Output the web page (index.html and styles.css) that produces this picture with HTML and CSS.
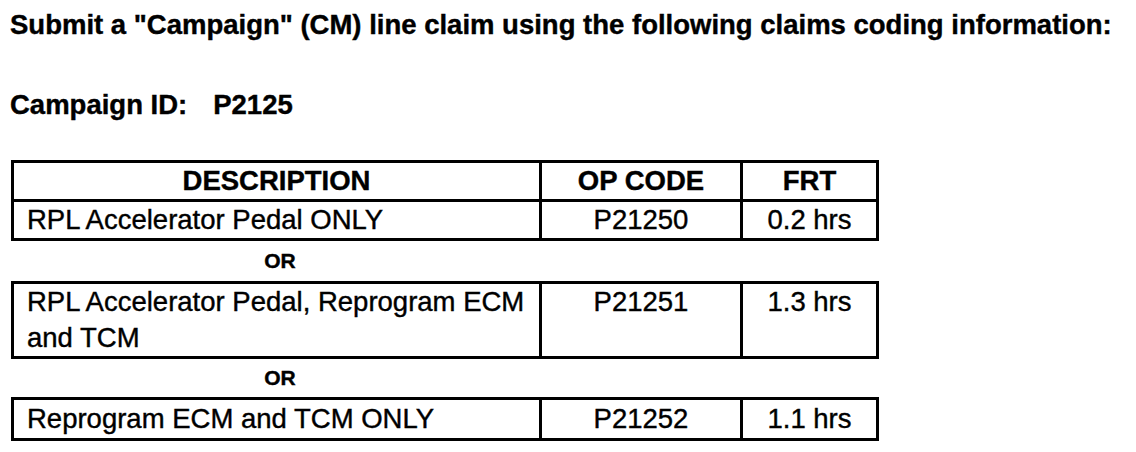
FILE: index.html
```html
<!DOCTYPE html>
<html lang="en">
<head>
<meta charset="utf-8">
<title>Campaign claim</title>
<link rel="stylesheet" href="styles.css">
</head>
<body>
<main class="page">
  <h1 class="title">Submit a "Campaign" (CM) line claim using the following claims coding information:</h1>
  <p class="campaign">Campaign ID:<span class="campaign-id">P2125</span></p>

  <table class="claim claim-head">
    <colgroup><col class="c-desc"><col class="c-op"><col class="c-frt"></colgroup>
    <tr class="row head">
      <th>DESCRIPTION</th><th>OP CODE</th><th>FRT</th>
    </tr>
    <tr class="row">
      <td class="desc">RPL Accelerator Pedal ONLY</td><td class="op">P21250</td><td class="frt">0.2 hrs</td>
    </tr>
  </table>

  <div class="or">OR</div>

  <table class="claim">
    <colgroup><col class="c-desc"><col class="c-op"><col class="c-frt"></colgroup>
    <tr class="row">
      <td class="desc">RPL Accelerator Pedal, Reprogram ECM and TCM</td><td class="op">P21251</td><td class="frt">1.3 hrs</td>
    </tr>
  </table>

  <div class="or or-last">OR</div>

  <table class="claim claim-last">
    <colgroup><col class="c-desc"><col class="c-op"><col class="c-frt"></colgroup>
    <tr class="row">
      <td class="desc">Reprogram ECM and TCM ONLY</td><td class="op">P21252</td><td class="frt">1.1 hrs</td>
    </tr>
  </table>
</main>
</body>
</html>
```

FILE: styles.css
```css
html, body {
  margin: 0;
  padding: 0;
  background: #ffffff;
}

body {
  font-family: "Liberation Sans", Arial, Helvetica, sans-serif;
  color: #000000;
  -webkit-text-stroke: 0.4px #000000;
}

.page {
  padding: 9px 0 0 10px;
}

.title {
  margin: 0;
  font-size: 27.5px;
  line-height: 31px;
  font-weight: 700;
  white-space: nowrap;
}

.campaign {
  margin: 49px 0 0;
  font-size: 27.5px;
  line-height: 31px;
  font-weight: 700;
}

.campaign-id {
  margin-left: 26px;
}

.claim {
  margin: 40px 0 0 1px;
  width: 865px;
  table-layout: fixed;
  border-collapse: collapse;
  font-size: 27.5px;
  line-height: 36px;
}

.claim-head {
  margin-top: 40px;
}

.claim + .or,
.or + .claim {
  margin-top: 0;
}

.c-desc { width: 528px; }
.c-op { width: 201px; }
.c-frt { width: 136px; }

.claim th,
.claim td {
  border: 3px solid #000000;
  padding: 0 13px;
  vertical-align: top;
}

.claim th {
  font-weight: 700;
  text-align: center;
}

.claim .op,
.claim .frt {
  text-align: center;
}

.claim-last td {
  line-height: 38px;
}

.or {
  width: 540px;
  text-align: center;
  font-size: 21px;
  font-weight: 700;
  line-height: 40px;
}

.or-last {
  line-height: 38px;
}
```
